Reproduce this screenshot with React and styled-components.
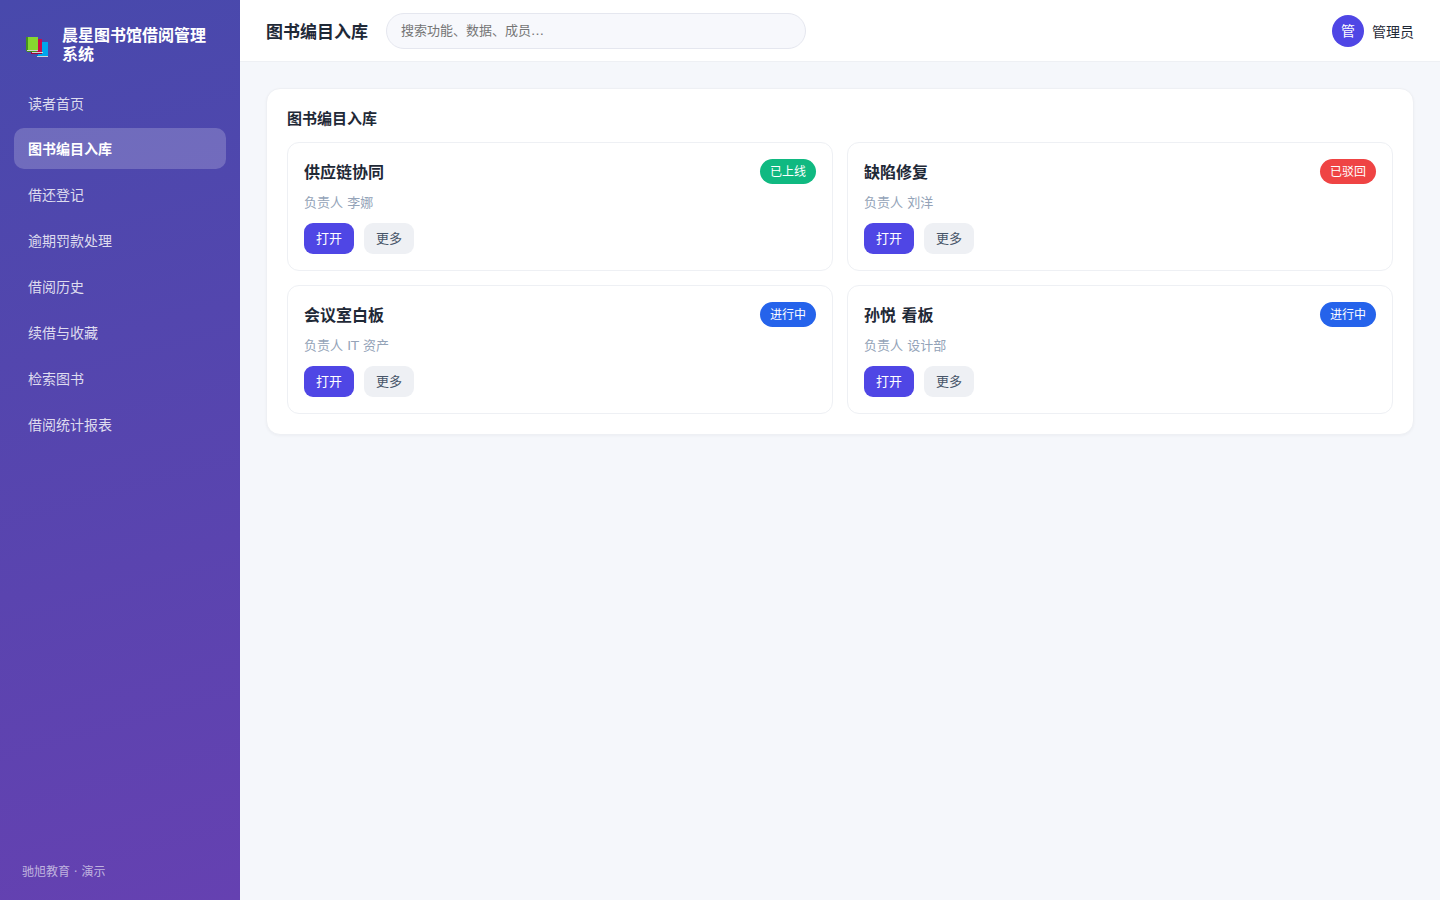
import React from 'react'
import styled, { createGlobalStyle } from 'styled-components'

const menuItems = [
  '读者首页',
  '图书编目入库',
  '借还登记',
  '逾期罚款处理',
  '借阅历史',
  '续借与收藏',
  '检索图书',
  '借阅统计报表'
]

const cards = [
  { id: 1, title: '供应链协同', owner: '李娜', status: '已上线', color: '#10b981' },
  { id: 2, title: '缺陷修复', owner: '刘洋', status: '已驳回', color: '#ef4444' },
  { id: 3, title: '会议室白板', owner: 'IT 资产', status: '进行中', color: '#2563eb' },
  { id: 4, title: '孙悦 看板', owner: '设计部', status: '进行中', color: '#2563eb' }
]

const BooksIcon = () => (
  <svg width="22" height="20" viewBox="0 0 22 20" shapeRendering="crispEdges">
    <path d="M12 5h9l1 1v13H12z" fill="#00a6ed" />
    <path d="M10 18h2v1h10v1H11z" fill="#0074ba" />
    <path d="M11 19h11v1H11z" fill="#d3d3d3" />
    <path d="M7 2h8l1 1v12H7z" fill="#ca0b4a" />
    <path d="M5 14h2v1h10v1H6v1H5z" fill="#990838" />
    <path d="M6 15h11v1H6z" fill="#d3d3d3" />
    <path d="M6 16h10v1H6z" fill="#990838" />
    <path d="M2 0h9l1 1v13H2z" fill="#86d72f" />
    <path d="M0 0h2v13H1v1H0z" fill="#44911b" />
    <path d="M1 13h11v1H1z" fill="#d3d3d3" />
    <path d="M1 14h10v1H1z" fill="#44911b" />
  </svg>
)

const App = () => {
  const current = '图书编目入库'
  return (
    <Layout>
      <GlobalStyle />
      <Sidebar>
        <Brand>
          <BrandIcon>
            <BooksIcon />
          </BrandIcon>
          <BrandName>晨星图书馆借阅管理系统</BrandName>
        </Brand>
        <Menu>
          {menuItems.map(item => (
            <MenuItem key={item} $active={item === current}>
              {item}
            </MenuItem>
          ))}
        </Menu>
        <SidebarFooter>驰旭教育 · 演示</SidebarFooter>
      </Sidebar>
      <Main>
        <Header>
          <PageTitle>{current}</PageTitle>
          <Search placeholder="搜索功能、数据、成员…" />
          <User>
            <Avatar>管</Avatar>
            <span>管理员</span>
          </User>
        </Header>
        <Content>
          <Panel>
            <PanelTitle>{current}</PanelTitle>
            <CardGrid>
              {cards.map(card => (
                <Card key={card.id}>
                  <CardTop>
                    <CardTitle>{card.title}</CardTitle>
                    <Badge $color={card.color}>{card.status}</Badge>
                  </CardTop>
                  <Owner>负责人 {card.owner}</Owner>
                  <Actions>
                    <Button $primary>打开</Button>
                    <Button>更多</Button>
                  </Actions>
                </Card>
              ))}
            </CardGrid>
          </Panel>
        </Content>
      </Main>
    </Layout>
  )
}

const GlobalStyle = createGlobalStyle`
  * {
    box-sizing: border-box;
  }
  body {
    margin: 0;
    color: #1f2937;
    background: #f5f7fb;
    font-family: 'DejaVu Sans', 'Noto Sans CJK SC', sans-serif;
    font-size: 14px;
  }
  input, button {
    font-family: inherit;
  }
`

const Layout = styled.div`
  display: flex;
  height: 100vh;
`

const Sidebar = styled.aside`
  display: flex;
  flex-direction: column;
  flex: none;
  width: 240px;
  padding: 18px 14px;
  color: #fff;
  background: linear-gradient(165deg, #4849ac, #6541b1);
`

const Brand = styled.div`
  display: flex;
  align-items: center;
  gap: 10px;
  padding: 8px 8px 18.58px 10px;
`

const BrandIcon = styled.div`
  display: flex;
  flex: none;
  width: 28px;
  padding: 3px 0 0 2px;
`

const BrandName = styled.div`
  font-size: 16px;
  font-weight: 700;
  line-height: 19px;
`

const Menu = styled.nav`
  display: flex;
  flex: 1;
  flex-direction: column;
  gap: 4.87px;
`

const MenuItem = styled.a`
  height: 41px;
  padding: 1px 14px 0;
  border-radius: 10px;
  font-size: 14px;
  line-height: 41px;
  font-weight: ${props => (props.$active ? 700 : 400)};
  color: ${props => (props.$active ? '#fff' : 'rgba(255, 255, 255, 0.82)')};
  background: ${props => (props.$active ? 'rgba(255, 255, 255, 0.2)' : 'transparent')};
`

const SidebarFooter = styled.div`
  padding: 0 8px;
  font-size: 12px;
  line-height: 20px;
  color: rgba(255, 255, 255, 0.6);
`

const Main = styled.main`
  display: flex;
  flex: 1;
  flex-direction: column;
  min-width: 0;
`

const Header = styled.header`
  display: flex;
  align-items: center;
  gap: 18px;
  height: 62px;
  padding: 0 26px;
  background: #fff;
  border-bottom: 1px solid #eef0f4;
`

const PageTitle = styled.h1`
  margin: 0;
  padding-top: 2px;
  font-size: 17px;
  line-height: 24px;
  font-weight: 700;
`

const Search = styled.input`
  width: 420px;
  height: 36px;
  padding: 0 14px;
  border: 1px solid #e5e7ef;
  border-radius: 18px;
  background: #f7f8fc;
  font-size: 13px;
  outline: none;
  &::placeholder {
    color: #757575;
  }
`

const User = styled.div`
  display: flex;
  align-items: center;
  gap: 8px;
  margin-left: auto;
  font-size: 14px;
`

const Avatar = styled.div`
  display: flex;
  align-items: center;
  justify-content: center;
  width: 32px;
  height: 32px;
  padding-bottom: 1px;
  border-radius: 50%;
  color: #fff;
  background: #4f46e5;
`

const Content = styled.div`
  padding: 26px;
`

const Panel = styled.section`
  padding: 20px;
  border: 1px solid #eef0f4;
  border-radius: 14px;
  background: #fff;
  box-shadow: 0 1px 3px rgba(16, 24, 40, 0.04);
`

const PanelTitle = styled.h2`
  margin: 0 0 13px;
  padding-top: 1px;
  font-size: 15px;
  line-height: 19px;
  font-weight: 700;
`

const CardGrid = styled.div`
  display: grid;
  grid-template-columns: 1fr 1fr;
  gap: 14px;
`

const Card = styled.article`
  height: 129px;
  padding: 16px;
  border: 1px solid #eef0f4;
  border-radius: 12px;
`

const CardTop = styled.div`
  display: flex;
  align-items: center;
  justify-content: space-between;
  height: 25px;
`

const CardTitle = styled.h3`
  margin: 0;
  padding-top: 2px;
  font-size: 16px;
  line-height: 24px;
  font-weight: 700;
`

const Badge = styled.span`
  height: 25px;
  padding: 1px 10px 0;
  border-radius: 13px;
  font-size: 12px;
  line-height: 25px;
  color: #fff;
  background: ${props => props.$color};
`

const Owner = styled.div`
  margin: 9px 0 10px;
  font-size: 13px;
  line-height: 20px;
  color: #94a3b8;
`

const Actions = styled.div`
  display: flex;
  gap: 10px;
`

const Button = styled.button`
  height: 31px;
  padding: 0 12px;
  border: none;
  border-radius: 9px;
  font-size: 13px;
  line-height: 31px;
  color: ${props => (props.$primary ? '#fff' : '#475569')};
  background: ${props => (props.$primary ? '#4f46e5' : '#eef0f4')};
`

export default App
